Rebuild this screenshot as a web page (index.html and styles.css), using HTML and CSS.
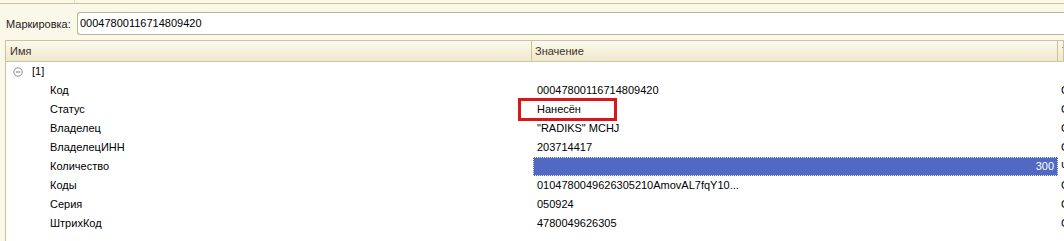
FILE: index.html
```html
<!DOCTYPE html>
<html>
<head>
    <title>Маркировка</title>
    <link rel="stylesheet" href="styles.css">
</head>
<body>
    <div class="topbar"><span class="tab"></span></div>

    <div class="field">
        <label>Маркировка:</label>
        <div class="input">00047800116714809420</div>
    </div>

    <div class="tree">
        <div class="row head">
            <div class="cell">Имя</div>
            <div class="cell">Значение</div>
            <div class="cell">Тип</div>
        </div>
        <div class="row">
            <div class="cell group">
                <svg class="toggle" width="10" height="10" viewBox="0 0 10 10">
                    <circle cx="5" cy="5" r="4.2" fill="#fff" stroke="#8c8c8c" stroke-width="1"/>
                    <line x1="2.8" y1="5" x2="7.2" y2="5" stroke="#6e6e6e" stroke-width="1"/>
                </svg>[1]
            </div>
            <div class="cell"></div>
            <div class="cell"></div>
        </div>
        <div class="row">
            <div class="cell name">Код</div>
            <div class="cell">00047800116714809420</div>
            <div class="cell">Строка</div>
        </div>
        <div class="row">
            <div class="cell name">Статус</div>
            <div class="cell">Нанесён</div>
            <div class="cell">Строка</div>
        </div>
        <div class="row">
            <div class="cell name">Владелец</div>
            <div class="cell">"RADIKS" MCHJ</div>
            <div class="cell">Строка</div>
        </div>
        <div class="row">
            <div class="cell name">ВладелецИНН</div>
            <div class="cell">203714417</div>
            <div class="cell">Строка</div>
        </div>
        <div class="row">
            <div class="cell name">Количество</div>
            <div class="cell selected">300</div>
            <div class="cell">Число</div>
        </div>
        <div class="row">
            <div class="cell name">Коды</div>
            <div class="cell">0104780049626305210AmovAL7fqY10...</div>
            <div class="cell">Строка</div>
        </div>
        <div class="row">
            <div class="cell name">Серия</div>
            <div class="cell">050924</div>
            <div class="cell">Строка</div>
        </div>
        <div class="row">
            <div class="cell name">ШтрихКод</div>
            <div class="cell">4780049626305</div>
            <div class="cell">Строка</div>
        </div>
    </div>

    <div class="mark"></div>
</body>
</html>
```

FILE: styles.css
```css
body {
    margin: 0;
    width: 1064px;
    height: 241px;
    overflow: hidden;
    background: #fbf8ea;
    font-family: "Liberation Sans", Arial, sans-serif;
    font-size: 11px;
    color: #000;
}
.topbar {
    height: 3px;
    border-bottom: 1px solid #cdc49e;
}
.tab {
    display: block;
    width: 74px;
    height: 3px;
    border-right: 1px solid #e2dcc0;
}
.field {
    display: flex;
    align-items: center;
    padding: 8px 0 0 6px;
}
.field label {
    width: 71px;
    color: #222;
}
.input {
    flex: 1;
    height: 21px;
    line-height: 21px;
    padding-left: 2px;
    background: #fff;
    border: 1px solid #bdb48e;
    border-right: none;
    border-radius: 3px 0 0 3px;
}
.tree {
    margin: 5px 0 0 5px;
    border-left: 1px solid #cbc39f;
    border-top: 1px solid #cbc39f;
    background: #fff;
    height: 200px;
}
.row {
    display: grid;
    grid-template-columns: 526px 526px 1fr;
    height: 19px;
    line-height: 19px;
    white-space: nowrap;
}
.cell {
    overflow: hidden;
    padding-left: 4px;
}
.head {
    height: 20px;
    line-height: 20px;
    background: linear-gradient(#fcf9ed, #efe8cb);
    border-bottom: 1px solid #cfc7a3;
    color: #3b3325;
}
.head .cell {
    border-right: 1px solid #cbc39f;
    padding-left: 4px;
}
.head .cell:nth-child(2) {
    padding-left: 3px;
}
.row:not(.head) .cell:nth-child(2) {
    padding-left: 5px;
}
.row:not(.head) .cell:nth-child(3) {
    padding-left: 3px;
}
.group {
    display: flex;
    align-items: center;
    padding-left: 7px;
}
.toggle {
    margin-right: 9px;
}
.name {
    padding-left: 44px;
}
.row:not(.head) .cell.selected {
    background: #5169c3;
    color: #fff;
    text-align: right;
    padding: 0 4px 0 0;
    margin-left: 1px;
    outline: 1px dotted #e8ecff;
    outline-offset: -1px;
}
.mark {
    position: absolute;
    left: 518px;
    top: 98px;
    width: 99px;
    height: 23px;
    box-sizing: border-box;
    border: 3px solid #dc141c;
}
```
